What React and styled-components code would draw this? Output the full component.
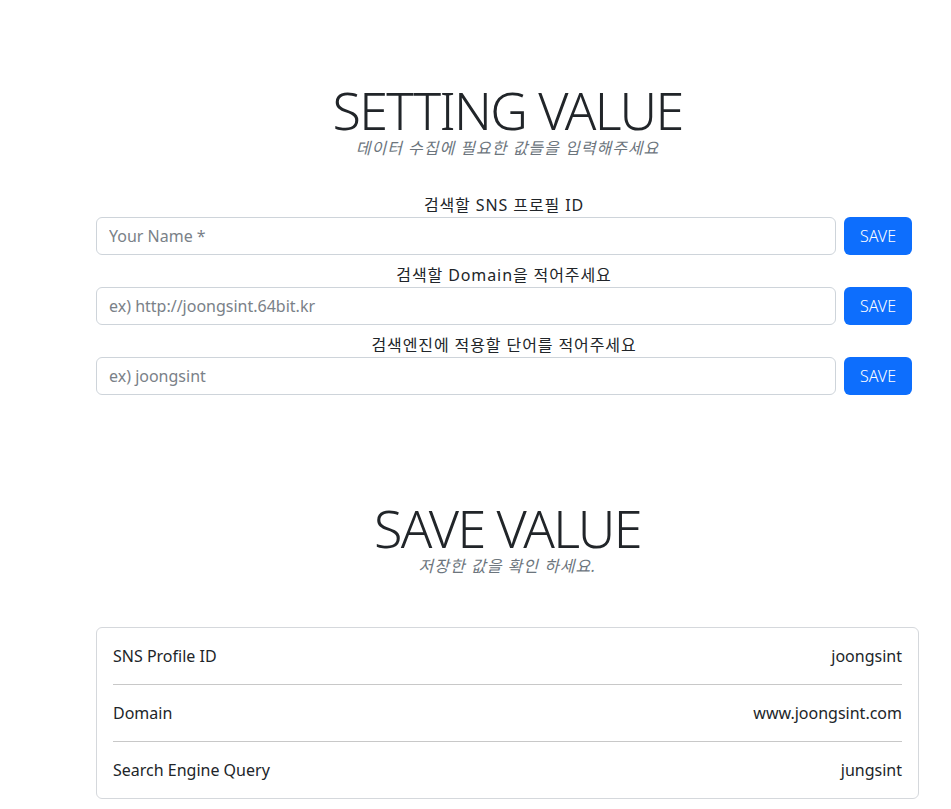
import React from 'react';
import styled, { createGlobalStyle } from 'styled-components';

const GlobalStyle = createGlobalStyle`
    body {
        margin: 0;
        background: #fff;
        color: #212529;
        font-family: "Noto Sans", "Noto Sans CJK KR", sans-serif;
        font-size: 16px;
    }
    * { box-sizing: border-box; }
`

const fields = [
    { label: '검색할 SNS 프로필 ID', placeholder: 'Your Name *' },
    { label: '검색할 Domain을 적어주세요', placeholder: 'ex) http://joongsint.64bit.kr' },
    { label: '검색엔진에 적용할 단어를 적어주세요', placeholder: 'ex) joongsint' },
];

const saved = [
    { name: 'SNS Profile ID', value: 'joongsint' },
    { name: 'Domain', value: 'www.joongsint.com' },
    { name: 'Search Engine Query', value: 'jungsint' },
];

function App() {
    return (
        <Page>
            <GlobalStyle />
            <Section>
                <Title>SETTING VALUE</Title>
                <Subtitle>데이터 수집에 필요한 값들을 입력해주세요</Subtitle>
                <Form>
                    {fields.map((f, i) => (
                        <Field key={i}>
                            <Label>{f.label}</Label>
                            <InputRow>
                                <Input placeholder={f.placeholder} />
                                <SaveButton>SAVE</SaveButton>
                            </InputRow>
                        </Field>
                    ))}
                </Form>
            </Section>
            <Section second>
                <Title>SAVE VALUE</Title>
                <Subtitle>저장한 값을 확인 하세요.</Subtitle>
                <Card>
                    {saved.map((s, i) => (
                        <Row key={i}>
                            <span>{s.name}</span>
                            <span>{s.value}</span>
                        </Row>
                    ))}
                </Card>
            </Section>
        </Page>
    )
}

export default App

const Page = styled.div`
    padding: 81px 32px 0 96px;
`
const Section = styled.section`
    display: flex;
    flex-direction: column;
    margin-top: ${props => props.second ? '96px' : '0'};
`
const Title = styled.h1`
    margin: 0;
    text-align: center;
    font-size: 52px;
    font-weight: 300;
    line-height: 1.1;
    letter-spacing: -1.6px;
    color: #212529;
`
const Subtitle = styled.p`
    margin: 0;
    text-align: center;
    font-style: italic;
    font-size: 16px;
    line-height: 20px;
    letter-spacing: 1px;
    color: #6c757d;
`
const Form = styled.div`
    display: flex;
    flex-direction: column;
    margin-top: 35px;
    padding-right: 7px;
`
const Field = styled.div`
    display: flex;
    flex-direction: column;
    margin-bottom: 8px;
`
const Label = styled.label`
    text-align: center;
    font-size: 16px;
    line-height: 24px;
    letter-spacing: 0.9px;
`
const InputRow = styled.div`
    display: flex;
    gap: 8px;
`
const Input = styled.input`
    flex: 1;
    height: 38px;
    padding: 0 12px;
    border: 1px solid #ced4da;
    border-radius: 6px;
    font-family: inherit;
    font-size: 16px;
    color: #212529;
    &::placeholder {
        color: #7a8188;
    }
`
const SaveButton = styled.button`
    width: 68px;
    height: 38px;
    border: none;
    border-radius: 6px;
    background: #0d6efd;
    color: #fff;
    font-family: inherit;
    font-size: 16px;
    font-weight: 300;
    cursor: pointer;
`
const Card = styled.div`
    margin-top: 51px;
    border: 1px solid #d5d8dc;
    border-radius: 6px;
    padding: 0 16px;
`
const Row = styled.div`
    display: flex;
    justify-content: space-between;
    align-items: center;
    height: 57px;
    border-bottom: 1px solid #c8c8c8;
    &:last-child {
        border-bottom: none;
        height: 56px;
    }
`
